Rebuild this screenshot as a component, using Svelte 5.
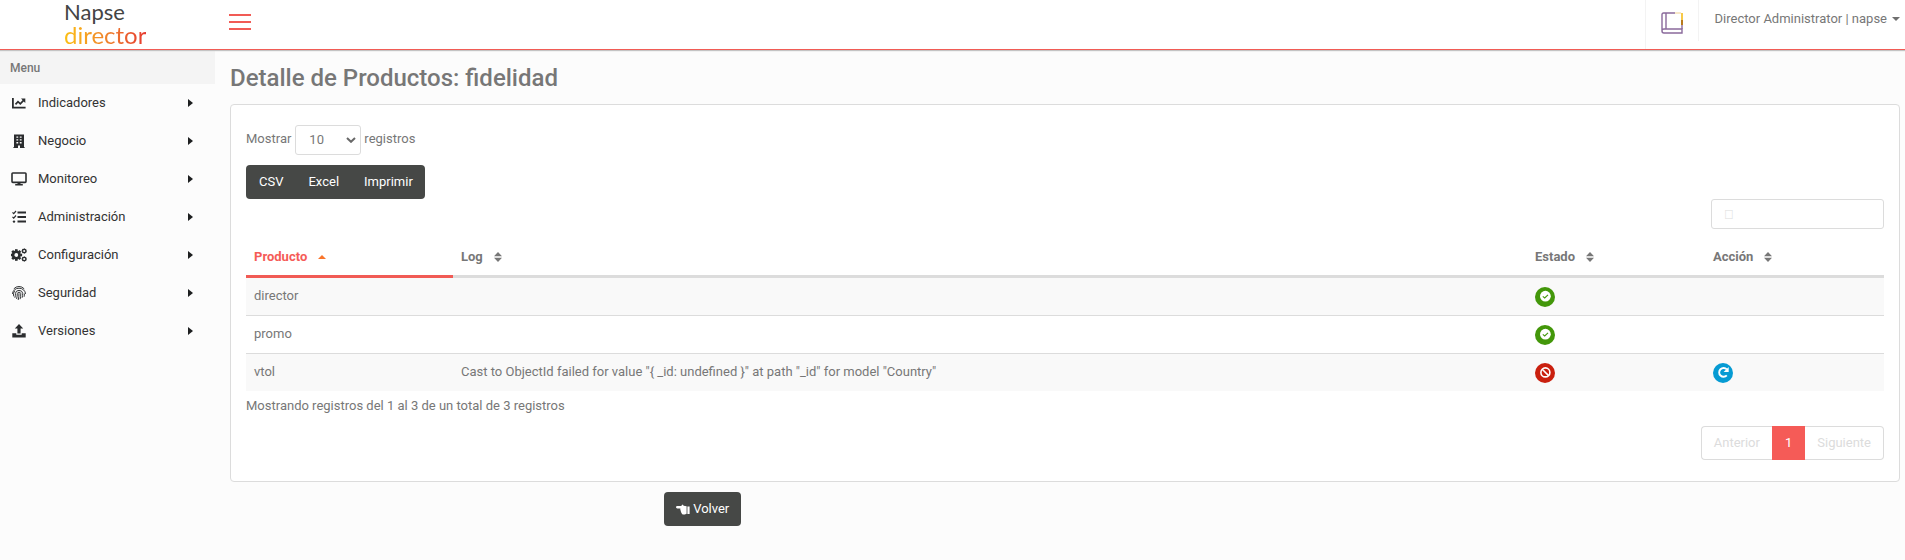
<script>
  const menu = [
    { label: 'Indicadores', icon: 'chart' },
    { label: 'Negocio', icon: 'building' },
    { label: 'Monitoreo', icon: 'monitor' },
    { label: 'Administración', icon: 'tasks' },
    { label: 'Configuración', icon: 'cogs' },
    { label: 'Seguridad', icon: 'finger' },
    { label: 'Versiones', icon: 'upload' }
  ];
  const columns = ['Producto', 'Log', 'Estado', 'Acción'];
  const rows = [
    { product: 'director', log: '', ok: true },
    { product: 'promo', log: '', ok: true },
    { product: 'vtol', log: 'Cast to ObjectId failed for value "{ _id: undefined }" at path "_id" for model "Country"', ok: false }
  ];
  const teeth = [0, 45, 90, 135, 180, 225, 270, 315];
  let pageSize = $state('10');
  let query = $state('');
</script>

<header class="topbar">
  <a class="logo" href="#home"><span class="napse">Napse</span><span class="director">director</span></a>
  <button class="burger" aria-label="Menu"><i></i><i></i><i></i></button>
  <div class="right">
    <a class="book" href="#manual" aria-label="Manual">
      <svg width="22" height="22" viewBox="0 0 22 22" fill="none">
        <path d="M14 1H2.5Q1 1 1 2.5V19q0 2 2 2H21V17H3q-2 0-2 2M5 1V17" stroke="#8a6a9c" stroke-width="1.4" />
        <path d="M21 12V17" stroke="#8a6a9c" stroke-width="1.4" />
        <path d="M14 1H20" stroke="#f5dfb0" stroke-width="1.4" />
        <path d="M21 1V8" stroke="#f7c948" stroke-width="2" />
        <path d="M21 8V13" stroke="#b87a1c" stroke-width="2" />
      </svg>
    </a>
    <button class="user">Director Administrator | napse
      <svg width="8" height="4" viewBox="0 0 8 4"><path d="M0 0H8L4 4Z" fill="#6f6f6f" /></svg>
    </button>
  </div>
</header>

<div class="shell">
  <nav class="side">
    <div class="menu-title">Menu</div>
    {#each menu as item}
      <a class="item" href="#{item.icon}">
        <svg class="ico" width="16" height="16" viewBox="0 0 16 16" fill="#2b2d2f">
          {#if item.icon === 'chart'}
            <path d="M1.9 3V12.6H14.6" fill="none" stroke="#2b2d2f" stroke-width="1.8" />
            <path d="M4.5 9.3 7 6.6 9.3 8.8 12.6 5.3" fill="none" stroke="#2b2d2f" stroke-width="1.7" />
            <path d="M10 3.6H14.3V7.9Z" />
          {:else if item.icon === 'building'}
            <path fill-rule="evenodd" d="M3 1.5H13V14H13.6V15H9V12.6H7V15H2.4V14H3ZM5.4 3.4V4.8H7.2V3.4ZM8.8 3.4V4.8H10.6V3.4ZM5.4 6.2V7.6H7.2V6.2ZM8.8 6.2V7.6H10.6V6.2ZM5.4 9V10.4H7.2V9ZM8.8 9V10.4H10.6V9Z" />
          {:else if item.icon === 'monitor'}
            <rect x="1" y="2" width="14" height="9.4" rx="0.8" fill="none" stroke="#2b2d2f" stroke-width="1.6" />
            <path d="M6.8 11H9.2L9.6 13H11.8V14.4H4.2V13H6.4Z" />
          {:else if item.icon === 'tasks'}
            <path d="M6.5 3.5H15M6.5 8H15M6.5 12.5H15" fill="none" stroke="#2b2d2f" stroke-width="1.8" />
            <path d="M1.5 3.4 2.7 4.6 5 2M1.5 7.9 2.7 9.1 5 6.5" fill="none" stroke="#2b2d2f" stroke-width="1.2" />
            <circle cx="3" cy="12.6" r="1.2" />
          {:else if item.icon === 'cogs'}
            <circle cx="5.3" cy="8" r="3.2" fill="none" stroke="#2b2d2f" stroke-width="2.6" />
            {#each teeth as t}<rect x="4" y="2.2" width="2.6" height="2" transform="rotate({t} 5.3 8)" />{/each}
            <circle cx="13.2" cy="4" r="1.7" fill="none" stroke="#2b2d2f" stroke-width="1.3" />
            <circle cx="13.2" cy="12" r="1.7" fill="none" stroke="#2b2d2f" stroke-width="1.3" />
            {#each teeth as t}
              <rect x="12.8" y="1.2" width="0.8" height="1" transform="rotate({t} 13.2 4)" />
              <rect x="12.8" y="9.2" width="0.8" height="1" transform="rotate({t} 13.2 12)" />
            {/each}
          {:else if item.icon === 'finger'}
            <g fill="none" stroke="#2b2d2f" stroke-width="0.95" stroke-linecap="round">
              <path d="M3 3.6A6.6 6.6 0 0 1 13 3.6" />
              <path d="M1.5 8.6A6.5 5.4 0 0 1 14.5 8.6M2.6 11A5.4 5 0 0 1 3.4 6.2" />
              <path d="M4 12.4A9 9 0 0 0 4.4 8.3A3.7 3.5 0 0 1 11.7 8.3Q11.8 10.5 11.2 12.4" />
              <path d="M5.7 13.6Q6.3 11 6.3 8.6A1.8 1.8 0 0 1 9.8 8.6Q9.8 11.4 9.2 13.8" />
              <path d="M8 8.6Q8.1 12 7.3 14.6M13.4 9Q13.5 10.2 13.2 11.4" />
            </g>
          {:else}
            <path d="M8 1 12.2 5.4H9.6V10.5H6.4V5.4H3.8Z" />
            <path d="M1.3 10.2H5.3V11.8H10.7V10.2H14.7V14.4H1.3Z" />
          {/if}
        </svg>
        <span>{item.label}</span>
        <svg class="caret" width="5" height="8" viewBox="0 0 5 8"><path d="M0 0 5 4 0 8Z" fill="#1d1f20" /></svg>
      </a>
    {/each}
  </nav>

  <main>
    <h1>Detalle de Productos: fidelidad</h1>
    <section class="card">
      <div class="length">
        <label for="size">Mostrar</label>
        <span class="pick">
          <select id="size" bind:value={pageSize}><option>10</option><option>25</option><option>50</option></select>
          <svg width="10" height="6" viewBox="0 0 10 6" fill="none"><path d="M1 1 5 4.8 9 1" stroke="#686868" stroke-width="2" /></svg>
        </span>
        <span>registros</span>
      </div>
      <div class="export"><button>CSV</button><button>Excel</button><button>Imprimir</button></div>
      <div class="search"><input type="search" aria-label="Buscar" placeholder="&#xF002;" bind:value={query} /></div>
      <table>
        <colgroup><col class="c1" /><col class="c2" /><col class="c3" /><col class="c4" /></colgroup>
        <thead>
          <tr>
            {#each columns as name, i}
              <th class:sorted={i === 0}><span>{name}
                {#if i === 0}
                  <svg width="8" height="10" viewBox="0 0 8 10"><path d="M0 7 4 3 8 7Z" fill="#f9752b" /></svg>
                {:else}
                  <svg width="8" height="10" viewBox="0 0 8 10"><path d="M0 4.2 4 0 8 4.2ZM0 5.8H8L4 10Z" fill="#777" /></svg>
                {/if}</span>
              </th>
            {/each}
          </tr>
        </thead>
        <tbody>
          {#each rows as row}
            <tr>
              <td>{row.product}</td>
              <td>{row.log}</td>
              <td class="glyph">
                <svg class="state" width="20" height="20" viewBox="0 0 20 20">
                  {#if row.ok}
                    <circle cx="10" cy="10" r="10" fill="#43970a" />
                    <circle cx="10.4" cy="9.2" r="5.4" fill="#fff" />
                    <path d="M7.8 9.4 9.7 11 13 7.8" fill="none" stroke="#43970a" stroke-width="1.1" />
                  {:else}
                    <circle cx="10" cy="10" r="10" fill="#ca200f" />
                    <circle cx="10.4" cy="9.4" r="4.5" fill="none" stroke="#fff" stroke-width="1.6" />
                    <path d="M7.2 6.2 13.6 12.6" stroke="#fff" stroke-width="1.6" />
                  {/if}
                </svg>
              </td>
              <td class="glyph">
                {#if !row.ok}
                  <button class="retry" aria-label="Reintentar">
                    <svg class="state" width="20" height="20" viewBox="0 0 20 20">
                      <circle cx="10" cy="10" r="10" fill="#069bd3" />
                      <path d="M13.8 6.4A4.4 4.4 0 1 0 13.8 12.4" fill="none" stroke="#fff" stroke-width="1.9" />
                      <path d="M15.7 4V9H10.6Z" fill="#fff" />
                    </svg>
                  </button>
                {/if}
              </td>
            </tr>
          {/each}
        </tbody>
      </table>
      <p class="info">Mostrando registros del 1 al 3 de un total de 3 registros</p>
      <div class="pages">
        <button disabled>Anterior</button><button class="current">1</button><button disabled>Siguiente</button>
      </div>
    </section>
    <div class="actions">
      <button class="back">
        <svg width="14" height="11" viewBox="0 0 14 11"><path d="M1.3 2H5.2L6 0.9Q6.6 0.2 7.2 1.1L7.6 1.8 10.6 2.2V9.8L8.8 10.4H7Q5.6 10.2 5.6 9 4.6 8.2 4.9 7 4 6 4.4 4.4H1.3Q0 4.2 0 3.2 0 2.1 1.3 2ZM11.4 2.6H13.6V10H11.4Z" fill="#fff" /></svg>
        Volver
      </button>
    </div>
  </main>
</div>

<style>
  :global(body) {
    background: #fcfcfc;
    font-family: Roboto, sans-serif;
    font-size: 13px;
    line-height: 20px;
    color: #777;
  }
  button, input, select { font: inherit; color: inherit; box-sizing: border-box; }
  button { border: 0; background: none; padding: 0; cursor: pointer; }
  a { color: inherit; text-decoration: none; }
  svg { flex: none; }

  .topbar {
    display: flex;
    height: 49px;
    background: #fff;
    border-bottom: 1px solid #f15b55;
    box-shadow: 0 1px 1px #c4c4c4;
    position: relative;
  }
  .logo {
    width: 165px;
    padding-left: 64px;
    display: flex;
    flex-direction: column;
    font-family: Lato, sans-serif;
    font-size: 22px;
    line-height: 23px;
  }
  .napse { color: #444; }
  .director {
    font-size: 24px;
    align-self: flex-start;
    background: linear-gradient(90deg, #fcc014, #ef7f2d 55%, #e6392f);
    background-clip: text;
    color: transparent;
  }
  .burger {
    display: flex;
    flex-direction: column;
    gap: 5px;
    width: 22px;
    margin-top: 14px;
    align-self: flex-start;
  }
  .burger i { height: 2px; background: #f15b55; }
  .right { margin-left: auto; display: flex; }
  .book {
    width: 52px;
    display: flex;
    align-items: flex-start;
    justify-content: center;
    padding-top: 12px;
    border-left: 1px solid #f3f3f3;
  }
  .user {
    display: flex;
    align-items: center;
    gap: 5px;
    height: 41px;
    padding: 0 5px 4px 16px;
    border-left: 1px solid #f3f3f3;
  }
  .shell { display: flex; }
  .side { width: 215px; flex: none; padding-top: 1px; }
  .menu-title {
    background: #f4f4f4;
    height: 33px;
    line-height: 34px;
    padding-left: 10px;
    font-size: 12px;
    font-weight: 500;
  }
  .item {
    display: flex;
    align-items: center;
    height: 38px;
    padding: 0 22px 0 11px;
    color: #333;
  }
  .item .ico { margin-right: 11px; }
  .caret { margin-left: auto; }

  main { flex: 1; min-width: 0; padding: 13px 5px 0 15px; }
  h1 { margin: 0; font-size: 24px; line-height: 30px; font-weight: 500; }
  .card {
    margin-top: 11px;
    background: #fff;
    border: 1px solid #dcdcdc;
    border-radius: 4px;
    padding: 20px 15px 21px;
  }
  .length { display: flex; align-items: center; gap: 3px; height: 30px; }
  .length label, .length > span:last-child { padding-bottom: 3px; }
  .length label { padding-right: 1px; }
  .pick { display: flex; position: relative; align-items: center; }
  .pick svg { position: absolute; right: 5px; pointer-events: none; }
  select {
    appearance: none;
    width: 66px;
    height: 30px;
    padding: 0 13px;
    border: 1px solid #dcdcdc;
    border-radius: 3px;
    background: #fff;
  }
  .export { display: inline-flex; margin-top: 10px; background: #464846; border-radius: 4px; overflow: hidden; vertical-align: top; }
  .export button { height: 34px; padding: 0 12px 0 13px; color: #fff; }
  .search { display: flex; justify-content: flex-end; }
  .search input {
    width: 173px;
    height: 30px;
    padding: 0 12px;
    border: 1px solid #dcdcdc;
    border-radius: 3px;
    background: #fff;
  }
  .search input::placeholder { color: #dcdcdc; font-family: "Liberation Sans", sans-serif; }
  table { width: 100%; border-collapse: separate; border-spacing: 0; table-layout: fixed; }
  .c1 { width: 207px; }
  .c3 { width: 178px; }
  .c4 { width: 179px; }
  th, td { text-align: left; padding: 0 8px; box-sizing: border-box; }
  th { height: 49px; padding-top: 10px; border-bottom: 3px solid #dcdcdc; font-weight: 700; }
  th span { display: flex; align-items: center; gap: 11px; }
  th.sorted { color: #f55b57; border-bottom-color: #f15b55; }
  td { height: 38px; border-top: 1px solid #dcdcdc; padding-bottom: 2px; }
  .glyph { padding-bottom: 0; }
  tr:first-child td { height: 37px; border-top: 0; }
  tbody tr:nth-child(odd) td { background: #f9f9f9; }
  .state, .retry { display: block; }
  .info { margin: 5px 0 10px; }
  .pages { display: flex; justify-content: flex-end; }
  .pages button { height: 34px; padding: 0 12px; border: 1px solid #dcdcdc; color: #dcdcdc; background: #fff; }
  .pages button:first-child { border-right: 0; border-radius: 4px 0 0 4px; }
  .pages button:last-child { border-left: 0; border-radius: 0 4px 4px 0; }
  .pages .current { background: #f55b57; border-color: #f55b57; color: #fff; }
  .actions { padding: 10px 0 0 26%; }
  .back {
    display: flex;
    align-items: center;
    gap: 3px;
    height: 34px;
    padding: 0 12px;
    border-radius: 4px;
    background: #464846;
    color: #fff;
  }
</style>
